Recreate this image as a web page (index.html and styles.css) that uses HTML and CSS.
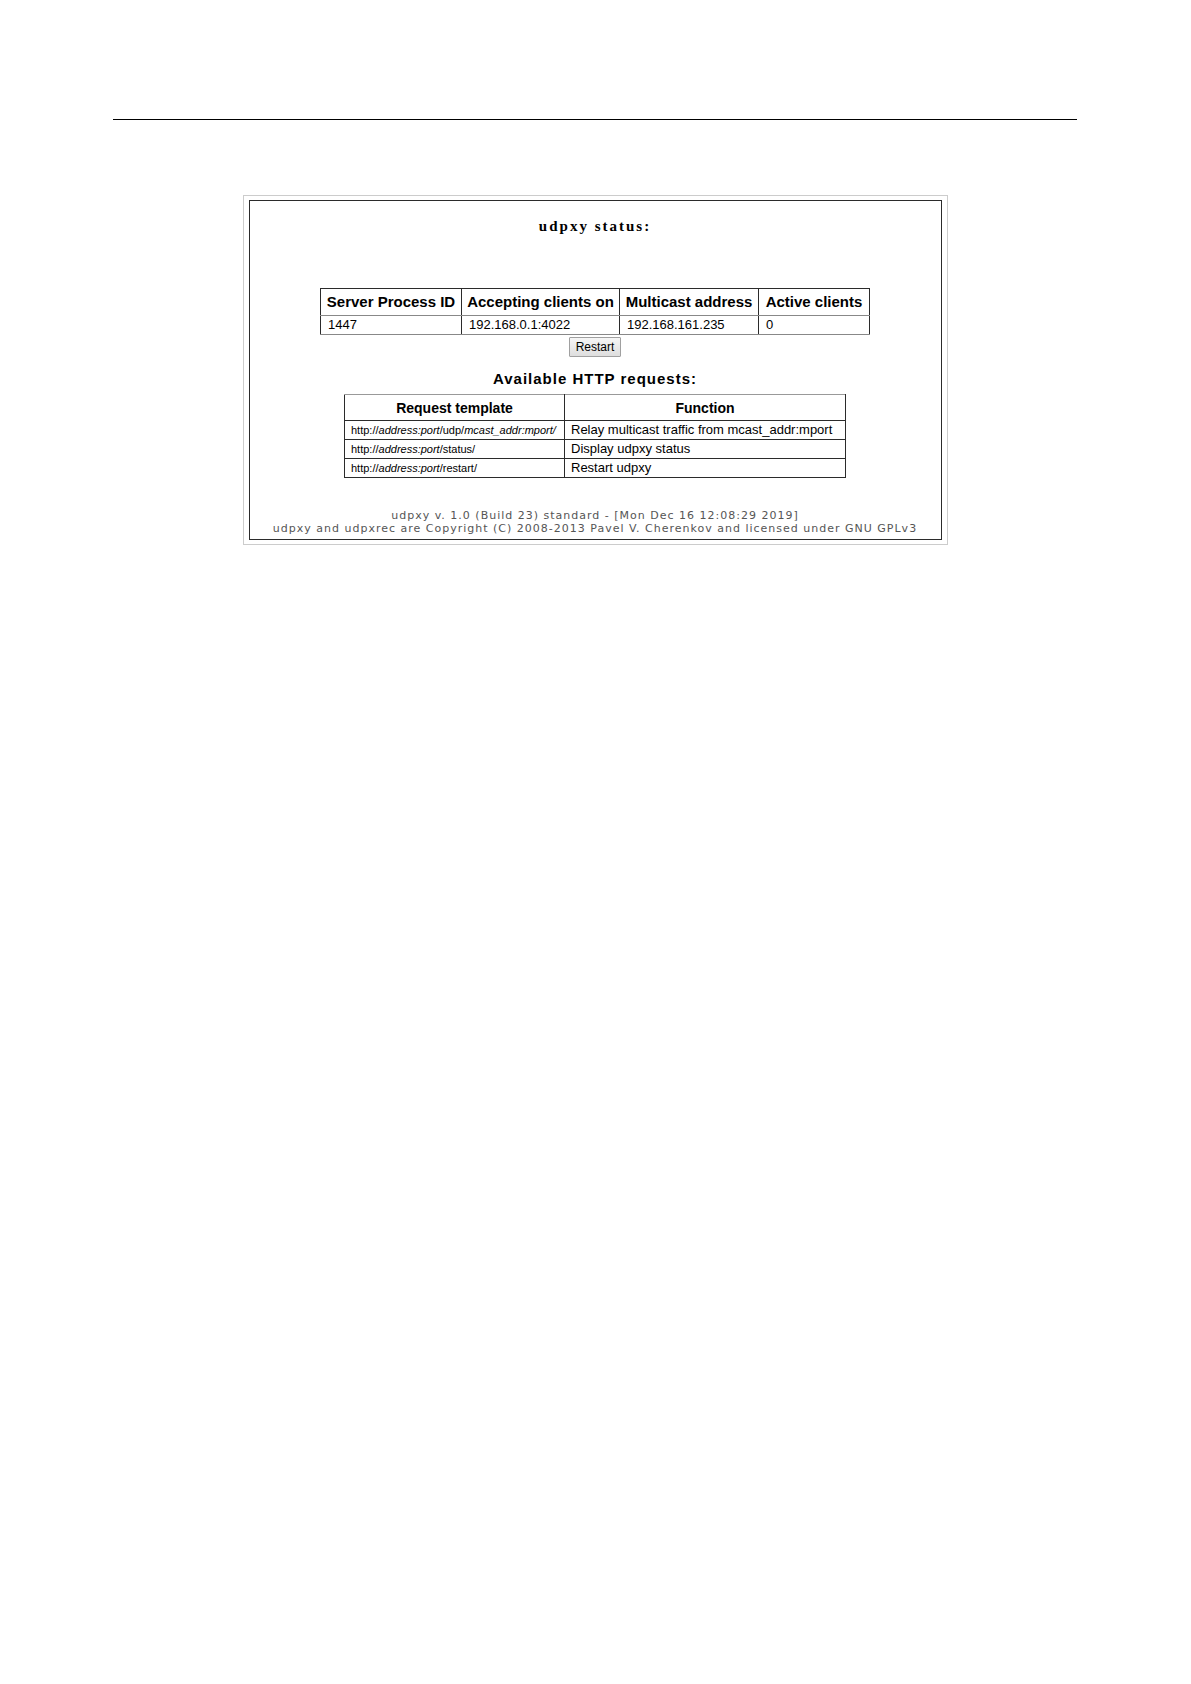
FILE: index.html
```html
<!DOCTYPE html>
<html lang="en">
<head>
<meta charset="utf-8">
<title>udpxy status</title>
<link rel="stylesheet" href="styles.css">
</head>
<body>
<hr class="rule">
<main class="frame">
  <div class="panel">
    <h1 class="title">udpxy status:</h1>
    <table class="grid server">
      <colgroup><col class="c-pid"><col class="c-listen"><col class="c-mcast"><col class="c-clients"></colgroup>
      <thead>
        <tr><th scope="col">Server Process ID</th><th scope="col">Accepting clients on</th><th scope="col">Multicast address</th><th scope="col">Active clients</th></tr>
      </thead>
      <tbody>
        <tr><td>1447</td><td>192.168.0.1:4022</td><td>192.168.161.235</td><td>0</td></tr>
      </tbody>
    </table>
    <button class="restart" type="button">Restart</button>
    <h2 class="subtitle">Available HTTP requests:</h2>
    <table class="grid requests">
      <colgroup><col class="c-template"><col class="c-function"></colgroup>
      <thead>
        <tr><th scope="col">Request template</th><th scope="col">Function</th></tr>
      </thead>
      <tbody>
        <tr><td class="url">http://<i>address:port</i>/udp/<i>mcast_addr:mport/</i></td><td>Relay multicast traffic from mcast_addr:mport</td></tr>
        <tr><td class="url">http://<i>address:port</i>/status/</td><td>Display udpxy status</td></tr>
        <tr><td class="url">http://<i>address:port</i>/restart/</td><td>Restart udpxy</td></tr>
      </tbody>
    </table>
    <footer class="footer">udpxy v. 1.0 (Build 23) standard - [Mon Dec 16 12:08:29 2019]<br>udpxy and udpxrec are Copyright (C) 2008-2013 Pavel V. Cherenkov and licensed under GNU GPLv3</footer>
  </div>
</main>
</body>
</html>
```
FILE: styles.css
```css
* { box-sizing: border-box; }

body {
  margin: 0;
  padding: 119px 114px 0 113px;
  background: #fff;
  color: #000;
  font-family: "Liberation Sans", Arial, sans-serif;
}

.rule {
  margin: 0 0 75px;
  border: 0;
  border-top: 1px solid #000;
}

.frame {
  max-width: 705px;
  margin: 0 auto;
  padding: 4px 5px;
  border: 1px solid #ccc;
}

.panel {
  display: flex;
  flex-direction: column;
  align-items: center;
  padding: 16px 8px 4px;
  border: 1px solid #2b2b2b;
}

.title {
  margin: 0 0 53px;
  font: bold 15px/18px "Liberation Serif", "Times New Roman", serif;
  letter-spacing: 2px;
}

.grid {
  border-collapse: collapse;
  white-space: nowrap;
}

.grid th,
.grid td {
  height: 19px;
  padding: 0 6px;
  border: 1px solid #2b2b2b;
  text-align: left;
}

.grid th {
  height: 27px;
  text-align: center;
}

.server th { padding: 0 5px; font-size: 15px; line-height: 18px; }
.server td { font-size: 13px; line-height: 16px; padding: 0 7px 1px; }
.server tbody td { border-top-color: #888; border-bottom-color: #888; }
.server thead th { border-bottom-color: #888; }

.c-pid { width: 141px; }
.c-listen { width: 158px; }
.c-mcast { width: 139px; }
.c-clients { width: 111px; }

.restart {
  margin: 2px 0 12px;
  height: 20px;
  padding: 0 6px;
  border: 1px solid #a0a0a0;
  border-radius: 1px;
  background: linear-gradient(#f6f6f6, #dedede);
  color: #000;
  font: 12px/16px "Liberation Sans", Arial, sans-serif;
}

.subtitle {
  margin: 0 0 5px;
  font-size: 15px;
  line-height: 20px;
  letter-spacing: 1px;
}

.requests th { height: 26px; font-size: 14px; line-height: 18px; border-top-color: #999; }
.requests td { font-size: 13px; line-height: 16px; }
.requests .url { font-size: 11px; }

.c-template { width: 220px; }
.c-function { width: 281px; }

.footer {
  margin-top: 31px;
  color: #555;
  font: 11px/13px "DejaVu Sans", Verdana, sans-serif;
  letter-spacing: 1px;
  text-align: center;
}
```
